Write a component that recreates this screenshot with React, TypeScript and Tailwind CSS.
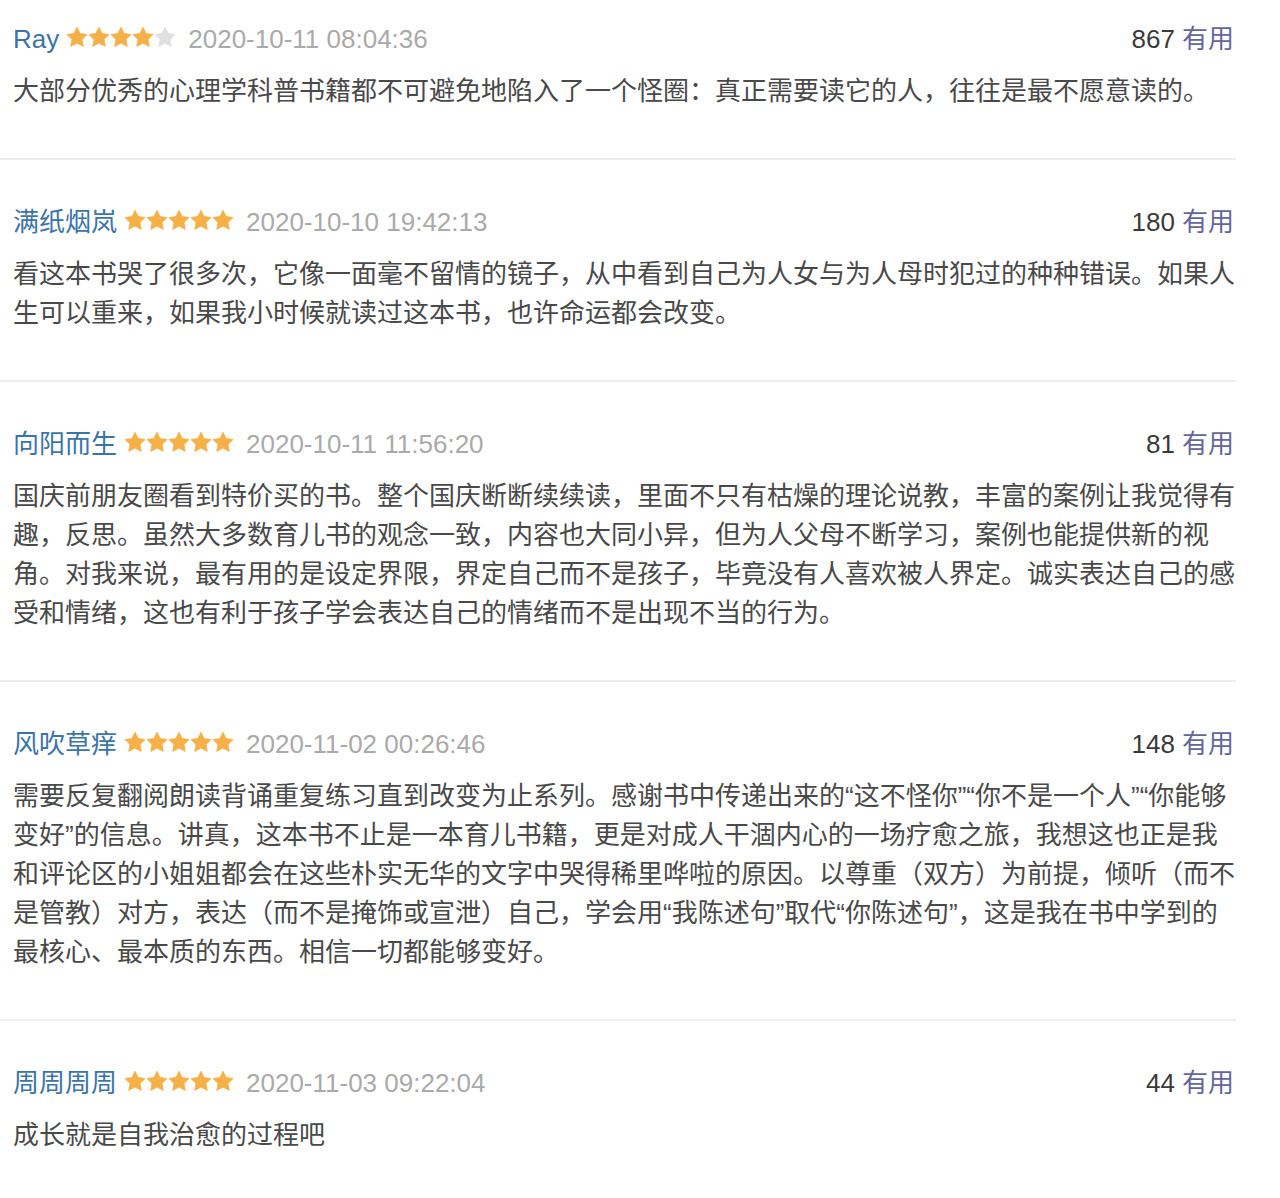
const REVIEWS = [
  {
    name: "Ray",
    rating: 4,
    time: "2020-10-11 08:04:36",
    votes: 867,
    text: "大部分优秀的心理学科普书籍都不可避免地陷入了一个怪圈：真正需要读它的人，往往是最不愿意读的。",
  },
  {
    name: "满纸烟岚",
    rating: 5,
    time: "2020-10-10 19:42:13",
    votes: 180,
    text: "看这本书哭了很多次，它像一面毫不留情的镜子，从中看到自己为人女与为人母时犯过的种种错误。如果人生可以重来，如果我小时候就读过这本书，也许命运都会改变。",
  },
  {
    name: "向阳而生",
    rating: 5,
    time: "2020-10-11 11:56:20",
    votes: 81,
    text: "国庆前朋友圈看到特价买的书。整个国庆断断续续读，里面不只有枯燥的理论说教，丰富的案例让我觉得有趣，反思。虽然大多数育儿书的观念一致，内容也大同小异，但为人父母不断学习，案例也能提供新的视角。对我来说，最有用的是设定界限，界定自己而不是孩子，毕竟没有人喜欢被人界定。诚实表达自己的感受和情绪，这也有利于孩子学会表达自己的情绪而不是出现不当的行为。",
  },
  {
    name: "风吹草痒",
    rating: 5,
    time: "2020-11-02 00:26:46",
    votes: 148,
    text: "需要反复翻阅朗读背诵重复练习直到改变为止系列。感谢书中传递出来的“这不怪你”“你不是一个人”“你能够变好”的信息。讲真，这本书不止是一本育儿书籍，更是对成人干涸内心的一场疗愈之旅，我想这也正是我和评论区的小姐姐都会在这些朴实无华的文字中哭得稀里哗啦的原因。以尊重（双方）为前提，倾听（而不是管教）对方，表达（而不是掩饰或宣泄）自己，学会用“我陈述句”取代“你陈述句”，这是我在书中学到的最核心、最本质的东西。相信一切都能够变好。",
  },
  {
    name: "周周周周",
    rating: 5,
    time: "2020-11-03 09:22:04",
    votes: 44,
    text: "成长就是自我治愈的过程吧",
  },
];

// chunky five-point star, 22x22 box
const STAR_POINTS = Array.from({ length: 10 }, (_, i) => {
  const r = i % 2 === 0 ? 10.6 : 5.3;
  const a = -Math.PI / 2 + (i * Math.PI) / 5;
  return `${(11 + r * Math.cos(a)).toFixed(2)},${(11.8 + r * Math.sin(a)).toFixed(2)}`;
}).join(" ");

function Star({ on }: { on: boolean }) {
  const c = on ? "#f5b048" : "#e0e0e0";
  return (
    <svg viewBox="0 0 22 22" className="w-[22px] h-[22px] shrink-0">
      <polygon points={STAR_POINTS} fill={c} stroke={c} strokeWidth="0.8" strokeLinejoin="round" />
    </svg>
  );
}

export default function App() {
  return (
    <main
      className="w-[1236px] bg-white"
      style={{ fontFamily: '"Liberation Sans", "Noto Sans CJK SC", sans-serif' }}
    >
      {REVIEWS.map((r, idx) => (
        <div
          key={r.name}
          className={`pl-[13px] pb-[47px] ${idx === 0 ? "pt-[20px]" : "pt-[43px]"} ${
            idx < REVIEWS.length - 1 ? "border-b-2 border-[#eeeeee]" : ""
          }`}
        >
          {/* header */}
          <div className="flex items-center justify-between text-[26px] leading-[39px] pr-[2px]">
            <div className="flex items-center">
              <span className="text-[#3b74a9]">{r.name}</span>
              <span className="flex items-center ml-[7px] mr-[12px] -mt-[5px]">
                {[0, 1, 2, 3, 4].map((i) => (
                  <Star key={i} on={i < r.rating} />
                ))}
              </span>
              <span className="text-[#aaaaaa]">{r.time}</span>
            </div>
            <div>
              <span className="text-[#3a3a3a]">{r.votes}</span>
              <span className="text-[#666699] ml-[7px]">有用</span>
            </div>
          </div>

          {/* body */}
          <p className="mt-[13px] text-[26px] leading-[39px] text-[#494949]">{r.text}</p>
        </div>
      ))}
    </main>
  );
}
